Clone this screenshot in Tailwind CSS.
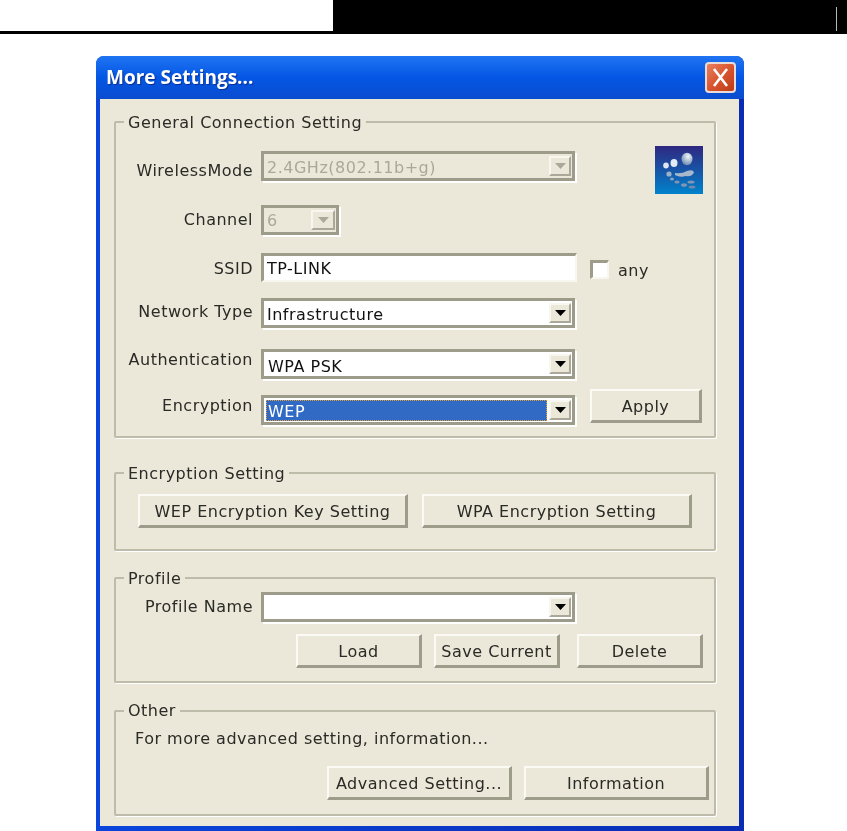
<!DOCTYPE html>
<html lang="en">
<head>
    <meta charset="UTF-8">
    <title>More Settings</title>
    <script src="https://cdn.jsdelivr.net/npm/@tailwindcss/browser@4"></script>
</head>
<body class="bg-white font-['DejaVu_Sans',sans-serif] text-[16px] tracking-[0.5px] text-[#2a2a26] h-[831px] overflow-hidden">

    <!-- page header from the manual -->
    <header class="flex h-[34px]">
        <div class="w-[333px] bg-white border-b-[3px] border-black"></div>
        <div class="flex-1 bg-black flex justify-end pt-[7px] pb-[3px] pr-[10px]">
            <div class="w-px bg-[#b8b8b8]"></div>
        </div>
    </header>

    <div class="ml-[96px] mt-[22px] w-[648px] h-[775px] rounded-t-[8px] bg-gradient-to-r from-[#0a45dc] to-[#0a2cb4] flex flex-col blur-[0.35px]">
        <!-- title bar -->
        <div class="h-[43px] rounded-t-[8px] bg-gradient-to-b from-[#1f74f2] via-[#0456e4] to-[#0a4ccf] flex items-center pl-[10px] pr-[8px]">
            <span class="font-['Open_Sans',sans-serif] font-bold text-[19px] tracking-[0px] text-white [text-shadow:1px_1px_1px_#0b2f8f]">More Settings...</span>
            <div class="ml-auto w-[31px] h-[31px] rounded-[4px] border-2 border-[#e9dcd6] bg-gradient-to-br from-[#e8805c] via-[#d8552f] to-[#bb3a14] flex items-center justify-center">
                <svg width="19" height="21" viewBox="0 0 19 21"><path d="M3 2 L16 19 M16 2 L3 19" stroke="#fff" stroke-width="2.6" fill="none"/></svg>
            </div>
        </div>

        <!-- dialog client area -->
        <div class="ml-[4px] mr-[5px] w-[639px] h-[727px] bg-[#ebe8d9] pl-[14px] pr-[23px] pt-[22px]">

            <section class="relative h-[317px] border-2 border-[#bdbbaa] rounded-[2px] shadow-[1px_1px_0_#fff] pt-[28px]">
                <span class="absolute left-[8px] -top-[10px] px-[4px] bg-[#ebe8d9] leading-[20px] whitespace-nowrap">General Connection Setting</span>

                <div class="flex h-[30px] items-start">
                    <label class="w-[137px] h-full pt-[10px] flex items-center justify-end">WirelessMode</label>
                    <div class="relative ml-[8px] w-[314px] h-[30px] border-[3px] border-[#9d9b89] bg-[#ebe8d9] shadow-[2px_2px_0_#fff] flex items-center justify-between pl-[3px] text-[#aca899]">
                        <span class="pt-[3px]">2.4GHz(802.11b+g)</span>
                        <div class="w-[22px] h-[20px] mr-[1px] border-t-2 border-l-2 border-[#f7f6ef] border-b-2 border-r-2 border-b-[#aca899] border-r-[#aca899] flex items-center justify-center">
                            <svg width="11" height="6" viewBox="0 0 11 6"><path d="M0 0H11L5.5 6Z" fill="#aca899"/></svg>
                        </div>
                    </div>
                    <div class="ml-[80px] -mt-[5px] w-[48px] h-[48px] shrink-0">
                        <svg width="48" height="48" viewBox="0 0 48 48">
                            <defs>
                                <linearGradient id="tile" x1="0" y1="0" x2="0" y2="1">
                                    <stop offset="0" stop-color="#2f2780"/>
                                    <stop offset="1" stop-color="#0082cc"/>
                                </linearGradient>
                                <radialGradient id="drop" cx="0.6" cy="0.3" r="0.8">
                                    <stop offset="0" stop-color="#f2f6fb"/>
                                    <stop offset="1" stop-color="#5f7ea8"/>
                                </radialGradient>
                            </defs>
                            <rect width="48" height="48" fill="url(#tile)"/>
                            <ellipse cx="32" cy="13" rx="5.5" ry="6.2" fill="url(#drop)"/>
                            <ellipse cx="19" cy="17" rx="3.5" ry="4" fill="#e4ebf3"/>
                            <ellipse cx="11" cy="19.5" rx="2.8" ry="3" fill="#dfe7f0"/>
                            <ellipse cx="14" cy="28" rx="2.6" ry="2.6" fill="#9fb1c8"/>
                            <path d="M20 27 Q27 28 32 25 Q38 23 39 26.5 Q37 31 31 30 Q25 32 20 29Z" fill="#a8b8cc"/>
                            <ellipse cx="17" cy="33" rx="2" ry="1.6" fill="#8ca1bd"/>
                            <ellipse cx="22" cy="36" rx="2.6" ry="1.6" fill="#7f95b3"/>
                            <ellipse cx="29" cy="39" rx="3" ry="1.8" fill="#7f95b3"/>
                            <ellipse cx="36" cy="36" rx="3.6" ry="1.6" fill="#8097b5"/>
                            <ellipse cx="37" cy="41" rx="3.4" ry="1.6" fill="#7089ab"/>
                        </svg>
                    </div>
                </div>

                <div class="flex h-[30px] mt-[24px]">
                    <label class="w-[137px] flex items-center justify-end">Channel</label>
                    <div class="ml-[8px] w-[78px] border-[3px] border-[#9d9b89] bg-[#ebe8d9] shadow-[2px_2px_0_#fff] flex items-center justify-between pl-[3px] text-[#aca899]">
                        <span class="pt-[2px]">6</span>
                        <div class="w-[24px] h-[20px] mr-[1px] border-t-2 border-l-2 border-[#f7f6ef] border-b-2 border-r-2 border-b-[#aca899] border-r-[#aca899] flex items-center justify-center">
                            <svg width="11" height="6" viewBox="0 0 11 6"><path d="M0 0H11L5.5 6Z" fill="#aca899"/></svg>
                        </div>
                    </div>
                </div>

                <div class="flex h-[29px] mt-[18px]">
                    <label class="w-[137px] pt-[2px] flex items-center justify-end">SSID</label>
                    <div class="ml-[8px] w-[316px] pt-[2px] border-t-[3px] border-l-[3px] border-b-[2px] border-r-[2px] border-t-[#9d9b89] border-l-[#9d9b89] border-b-[#f7f6ef] border-r-[#f7f6ef] bg-white flex items-center pl-[3px] text-[#111]">TP-LINK</div>
                    <div class="ml-[13px] mt-[7px] w-[19px] h-[19px] border-t-[3px] border-l-[3px] border-[#9d9b89] border-b-2 border-r-2 border-b-[#f7f6ef] border-r-[#f7f6ef] bg-white"></div>
                    <span class="ml-[9px] mt-[7px] leading-[22px]">any</span>
                </div>

                <div class="flex h-[30px] mt-[16px]">
                    <label class="w-[137px] pb-[2px] flex items-center justify-end">Network Type</label>
                    <div class="ml-[8px] w-[314px] border-[3px] border-[#9d9b89] bg-white shadow-[2px_2px_0_#fff] flex items-center justify-between pl-[3px] text-[#111]">
                        <span class="pt-[3px]">Infrastructure</span>
                        <div class="w-[22px] h-[20px] mr-[1px] bg-[#ebe8d9] border-t-2 border-l-2 border-[#f7f6ef] border-b-2 border-r-2 border-b-[#aca899] border-r-[#aca899] flex items-center justify-center">
                            <svg width="11" height="6" viewBox="0 0 11 6"><path d="M0 0H11L5.5 6Z" fill="#000"/></svg>
                        </div>
                    </div>
                </div>

                <div class="flex h-[30px] mt-[21px]">
                    <label class="w-[137px] pb-[8px] flex items-center justify-end">Authentication</label>
                    <div class="ml-[8px] w-[314px] border-[3px] border-[#9d9b89] bg-white shadow-[2px_2px_0_#fff] flex items-center justify-between pl-[4px] text-[#111]">
                        <span class="pt-[5px]">WPA PSK</span>
                        <div class="w-[22px] h-[20px] mr-[1px] bg-[#ebe8d9] border-t-2 border-l-2 border-[#f7f6ef] border-b-2 border-r-2 border-b-[#aca899] border-r-[#aca899] flex items-center justify-center">
                            <svg width="11" height="6" viewBox="0 0 11 6"><path d="M0 0H11L5.5 6Z" fill="#000"/></svg>
                        </div>
                    </div>
                </div>

                <div class="flex h-[30px] mt-[16px]">
                    <label class="w-[137px] pb-[8px] flex items-center justify-end">Encryption</label>
                    <div class="ml-[8px] w-[314px] border-[3px] border-[#9d9b89] bg-white shadow-[2px_2px_0_#fff] flex items-center justify-between pl-[2px] text-white">
                        <span class="w-[281px] h-[21px] pt-[4px] bg-[#316ac5] border border-dotted border-[#e8a030] flex items-center pl-[1px]">WEP</span>
                        <div class="w-[22px] h-[20px] mr-[1px] bg-[#ebe8d9] border-t-2 border-l-2 border-[#f7f6ef] border-b-2 border-r-2 border-b-[#aca899] border-r-[#aca899] flex items-center justify-center">
                            <svg width="11" height="6" viewBox="0 0 11 6"><path d="M0 0H11L5.5 6Z" fill="#000"/></svg>
                        </div>
                    </div>
                    <button class="ml-[15px] -mt-[6px] w-[112px] h-[34px] pt-[2px] bg-[#ebe8d9] border-t-2 border-l-2 border-[#fbfaf4] border-b-[3px] border-r-[3px] border-b-[#9d9b89] border-r-[#9d9b89]">Apply</button>
                </div>
            </section>

            <section class="relative h-[79px] mt-[34px] border-2 border-[#bdbbaa] rounded-[2px] shadow-[1px_1px_0_#fff] pt-[20px] pl-[22px] flex gap-[14px]">
                <span class="absolute left-[8px] -top-[10px] px-[4px] bg-[#ebe8d9] leading-[20px] whitespace-nowrap">Encryption Setting</span>
                <button class="w-[270px] h-[34px] pt-[3px] bg-[#ebe8d9] border-t-2 border-l-2 border-[#fbfaf4] border-b-[3px] border-r-[3px] border-b-[#9d9b89] border-r-[#9d9b89]">WEP Encryption Key Setting</button>
                <button class="w-[270px] h-[34px] pt-[3px] bg-[#ebe8d9] border-t-2 border-l-2 border-[#fbfaf4] border-b-[3px] border-r-[3px] border-b-[#9d9b89] border-r-[#9d9b89]">WPA Encryption Setting</button>
            </section>

            <section class="relative h-[106px] mt-[26px] border-2 border-[#bdbbaa] rounded-[2px] shadow-[1px_1px_0_#fff] pt-[13px]">
                <span class="absolute left-[8px] -top-[10px] px-[4px] bg-[#ebe8d9] leading-[20px]">Profile</span>
                <div class="flex h-[30px]">
                    <label class="w-[137px] flex items-center justify-end">Profile Name</label>
                    <div class="ml-[8px] w-[314px] border-[3px] border-[#9d9b89] bg-white shadow-[2px_2px_0_#fff] flex items-center justify-end">
                        <div class="w-[22px] h-[20px] mr-[1px] bg-[#ebe8d9] border-t-2 border-l-2 border-[#f7f6ef] border-b-2 border-r-2 border-b-[#aca899] border-r-[#aca899] flex items-center justify-center">
                            <svg width="11" height="6" viewBox="0 0 11 6"><path d="M0 0H11L5.5 6Z" fill="#000"/></svg>
                        </div>
                    </div>
                </div>
                <div class="flex mt-[12px] ml-[180px]">
                    <button class="w-[126px] h-[34px] pt-[2px] bg-[#ebe8d9] border-t-2 border-l-2 border-[#fbfaf4] border-b-[3px] border-r-[3px] border-b-[#9d9b89] border-r-[#9d9b89]">Load</button>
                    <button class="ml-[12px] w-[126px] h-[34px] pt-[2px] bg-[#ebe8d9] border-t-2 border-l-2 border-[#fbfaf4] border-b-[3px] border-r-[3px] border-b-[#9d9b89] border-r-[#9d9b89] whitespace-nowrap">Save Current</button>
                    <button class="ml-[17px] w-[126px] h-[34px] pt-[2px] bg-[#ebe8d9] border-t-2 border-l-2 border-[#fbfaf4] border-b-[3px] border-r-[3px] border-b-[#9d9b89] border-r-[#9d9b89]">Delete</button>
                </div>
            </section>

            <section class="relative h-[106px] mt-[27px] border-2 border-[#bdbbaa] rounded-[2px] shadow-[1px_1px_0_#fff]">
                <span class="absolute left-[8px] -top-[11px] px-[4px] bg-[#ebe8d9] leading-[20px]">Other</span>
                <p class="pl-[19px] pt-[17px] leading-[20px]">For more advanced setting, information...</p>
                <div class="flex mt-[17px] ml-[211px]">
                    <button class="w-[185px] h-[34px] pt-[3px] bg-[#ebe8d9] border-t-2 border-l-2 border-[#fbfaf4] border-b-[3px] border-r-[3px] border-b-[#9d9b89] border-r-[#9d9b89]">Advanced Setting...</button>
                    <button class="ml-[12px] w-[185px] h-[34px] pt-[3px] bg-[#ebe8d9] border-t-2 border-l-2 border-[#fbfaf4] border-b-[3px] border-r-[3px] border-b-[#9d9b89] border-r-[#9d9b89]">Information</button>
                </div>
            </section>
        </div>
    </div>
</body>
</html>
